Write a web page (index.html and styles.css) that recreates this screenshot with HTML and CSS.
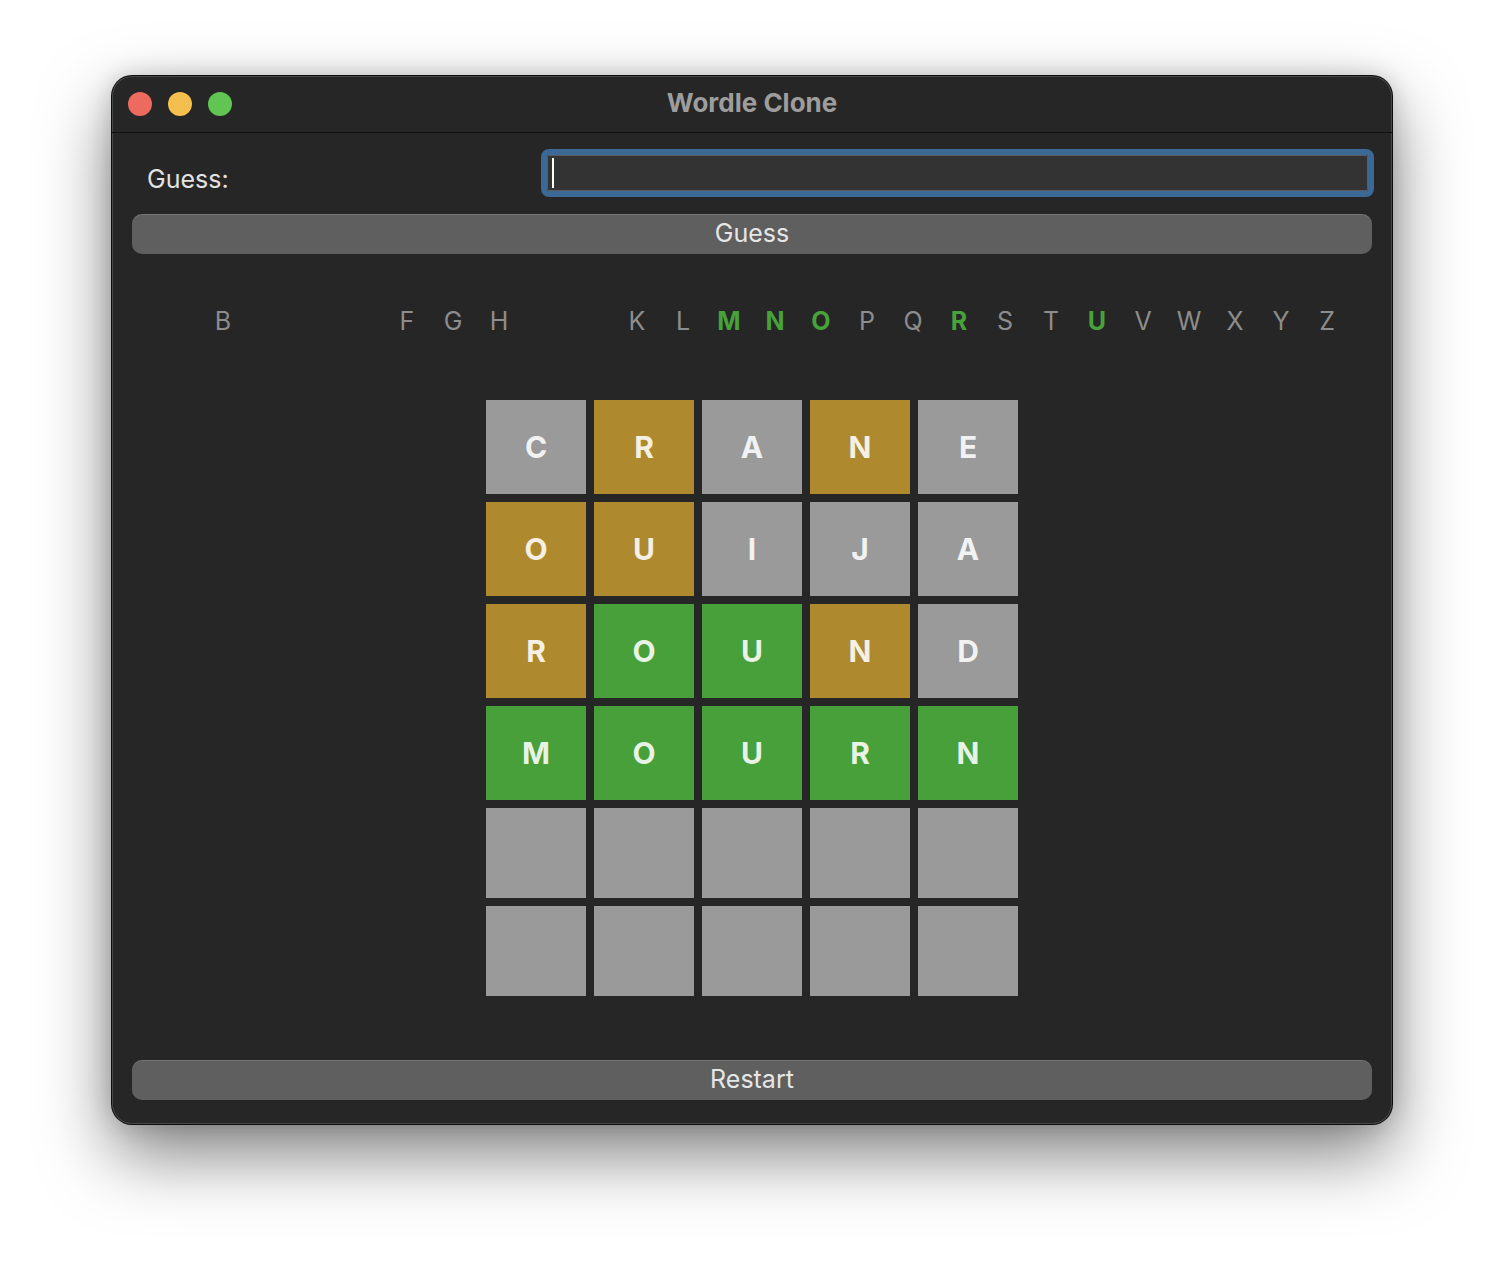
FILE: index.html
```html
<!DOCTYPE html>
<html>
<head>
<meta charset="utf-8">
<title>Wordle Clone</title>
<link rel="stylesheet" href="styles.css">
</head>
<body>
<div class="window">
  <div class="titlebar">
    <div class="lights">
      <span class="light red"></span>
      <span class="light yellow"></span>
      <span class="light green"></span>
    </div>
    <div class="title">Wordle Clone</div>
  </div>
  <div class="content">
    <div class="guess-row">
      <label class="guess-label">Guess:</label>
      <div class="field"><span class="caret"></span></div>
    </div>
    <button class="btn guess-btn">Guess</button>
    <div class="letters">
      <span class="ltr hidden">A</span>
      <span class="ltr">B</span>
      <span class="ltr hidden">C</span>
      <span class="ltr hidden">D</span>
      <span class="ltr hidden">E</span>
      <span class="ltr">F</span>
      <span class="ltr">G</span>
      <span class="ltr">H</span>
      <span class="ltr hidden">I</span>
      <span class="ltr hidden">J</span>
      <span class="ltr">K</span>
      <span class="ltr">L</span>
      <span class="ltr hit">M</span>
      <span class="ltr hit">N</span>
      <span class="ltr hit">O</span>
      <span class="ltr">P</span>
      <span class="ltr">Q</span>
      <span class="ltr hit">R</span>
      <span class="ltr">S</span>
      <span class="ltr">T</span>
      <span class="ltr hit">U</span>
      <span class="ltr">V</span>
      <span class="ltr">W</span>
      <span class="ltr">X</span>
      <span class="ltr">Y</span>
      <span class="ltr">Z</span>
    </div>
    <div class="board">
      <div class="tile grey">C</div>
      <div class="tile yellow">R</div>
      <div class="tile grey">A</div>
      <div class="tile yellow">N</div>
      <div class="tile grey">E</div>

      <div class="tile yellow">O</div>
      <div class="tile yellow">U</div>
      <div class="tile grey">I</div>
      <div class="tile grey">J</div>
      <div class="tile grey">A</div>

      <div class="tile yellow">R</div>
      <div class="tile green">O</div>
      <div class="tile green">U</div>
      <div class="tile yellow">N</div>
      <div class="tile grey">D</div>

      <div class="tile green">M</div>
      <div class="tile green">O</div>
      <div class="tile green">U</div>
      <div class="tile green">R</div>
      <div class="tile green">N</div>

      <div class="tile grey"></div>
      <div class="tile grey"></div>
      <div class="tile grey"></div>
      <div class="tile grey"></div>
      <div class="tile grey"></div>

      <div class="tile grey"></div>
      <div class="tile grey"></div>
      <div class="tile grey"></div>
      <div class="tile grey"></div>
      <div class="tile grey"></div>
    </div>
    <button class="btn restart-btn">Restart</button>
  </div>
</div>
</body>
</html>
```
FILE: styles.css
```css
* { box-sizing: border-box; }

html, body {
  margin: 0;
  padding: 0;
  background: #ffffff;
}

body {
  width: 1504px;
  height: 1272px;
  overflow: hidden;
  font-family: Inter, "Noto Sans", "Liberation Sans", sans-serif;
}

.window {
  width: 1280px;
  height: 1048px;
  margin: 76px 0 0 112px;
  background: #262626;
  border-radius: 20px;
  box-shadow:
    0 0 0 1px #0c0c0c,
    inset 0 0 0 1px rgba(255, 255, 255, 0.16),
    0 30px 70px rgba(0, 0, 0, 0.5),
    0 0 24px rgba(0, 0, 0, 0.18);
  display: flex;
  flex-direction: column;
  overflow: hidden;
}

.titlebar {
  height: 57px;
  flex: 0 0 57px;
  border-bottom: 1px solid #0e0e0e;
  display: flex;
  align-items: center;
  position: relative;
}

.lights {
  display: flex;
  gap: 16px;
  padding-left: 16px;
}

.light {
  width: 24px;
  height: 24px;
  border-radius: 50%;
  display: block;
}
.light.red { background: #ed6a5e; }
.light.yellow { background: #f4bf4f; }
.light.green { background: #61c554; }

.title {
  position: absolute;
  left: 0;
  right: 0;
  top: 0;
  bottom: 0;
  padding-bottom: 4px;
  display: flex;
  align-items: center;
  justify-content: center;
  font-weight: 700;
  font-size: 26px;
  color: #9d9d9d;
  pointer-events: none;
}

.content {
  padding: 0 20px;
  display: flex;
  flex-direction: column;
}

.guess-row {
  display: flex;
  align-items: center;
  margin-top: 22px;
  height: 36px;
}

.guess-label {
  flex: 0 0 415px;
  padding-left: 15px;
  padding-top: 12px;
  font-size: 25px;
  color: #e2e2e2;
}

.field {
  flex: 0 0 821px;
  height: 36px;
  background: #333333;
  border: 1px solid #5c5c5c;
  border-radius: 2px;
  outline: 6px solid #3b6894;
  outline-offset: 0;
  position: relative;
}

.caret {
  position: absolute;
  left: 4px;
  top: 2px;
  width: 2px;
  height: 30px;
  background: #ffffff;
}

.btn {
  display: block;
  width: 1240px;
  height: 40px;
  border: none;
  border-radius: 10px;
  background: #5f5f5f;
  box-shadow: inset 0 1px 0 rgba(255, 255, 255, 0.14);
  color: #e6e6e6;
  font-family: Inter, "Noto Sans", "Liberation Sans", sans-serif;
  font-size: 25px;
  padding: 0 0 2px 0;
  line-height: 38px;
}

.guess-btn {
  margin-top: 23px;
}

.letters {
  margin-top: 52px;
  height: 30px;
  display: flex;
  justify-content: center;
}

.ltr {
  width: 46px;
  text-align: center;
  font-size: 25px;
  line-height: 30px;
  color: #8d8d8d;
}
.ltr.hidden { visibility: hidden; }
.ltr.hit { color: #47a23a; font-weight: 700; }

.board {
  margin-top: 64px;
  align-self: center;
  display: grid;
  grid-template-columns: repeat(5, 100px);
  grid-template-rows: 94px 94px 94px 94px 90px 90px;
  gap: 8px;
}

.tile {
  display: flex;
  align-items: center;
  justify-content: center;
  font-weight: 700;
  font-size: 30px;
  color: rgba(255, 255, 255, 0.88);
}
.tile.grey { background: #9a9a9a; }
.tile.yellow { background: #ae892e; }
.tile.green { background: #48a03b; }

.restart-btn {
  margin-top: 64px;
}
```
